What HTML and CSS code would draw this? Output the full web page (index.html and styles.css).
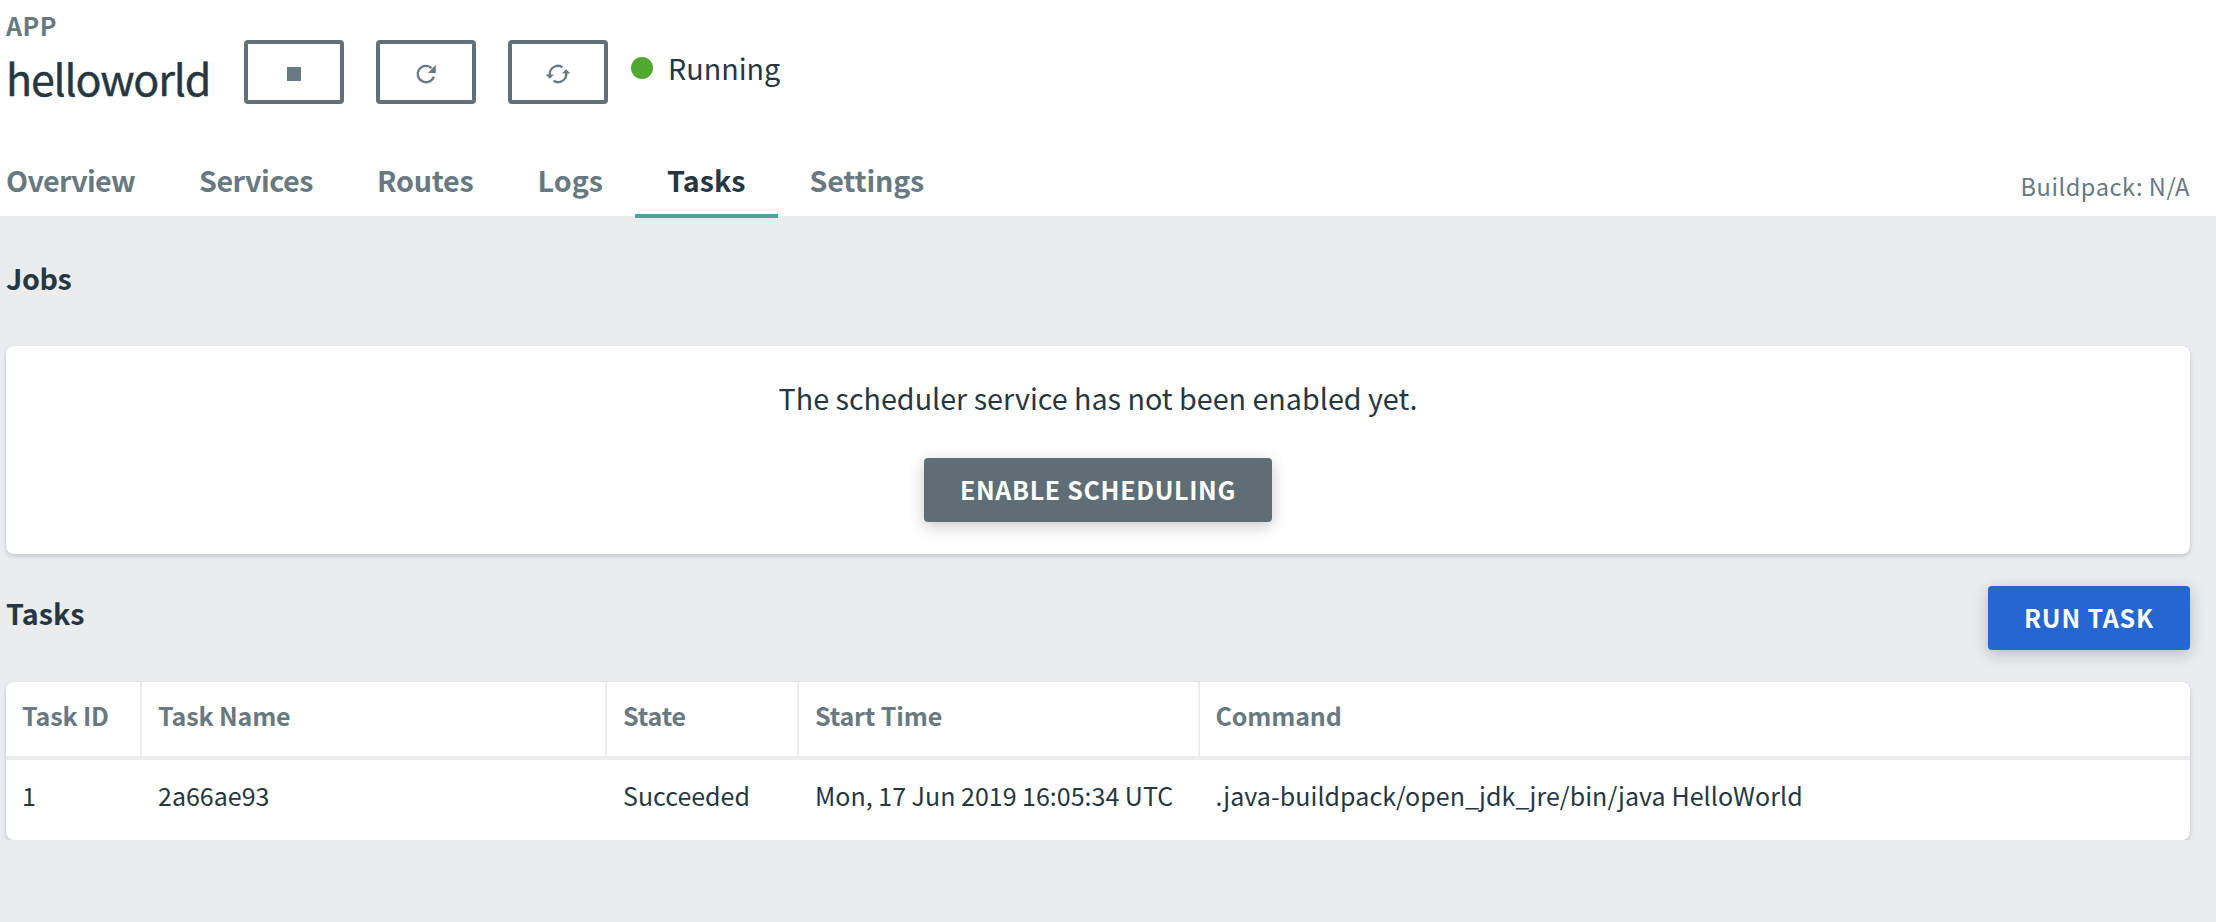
FILE: index.html
```
<!DOCTYPE html>
<html lang="en">
<head>
<meta charset="utf-8">
<title>helloworld</title>
<link rel="stylesheet" href="styles.css">
</head>
<body>
<header class="header">
  <div class="app-row">
    <div class="app-title">
      <div class="app-label">APP</div>
      <h1 class="app-name">helloworld</h1>
    </div>
    <div class="actions">
      <button class="icon-btn" aria-label="Stop"><svg width="28" height="28" viewBox="0 0 28 28"><rect x="7" y="7" width="14" height="14" fill="currentColor"/></svg></button>
      <button class="icon-btn" aria-label="Restart"><svg width="28" height="28" viewBox="0 0 28 28"><path d="M21.8 16.6A8.2 8.2 0 1 1 19.8 8.2" fill="none" stroke="currentColor" stroke-width="2.3"/><path d="M23.8 5v8h-8z" fill="currentColor"/></svg></button>
      <button class="icon-btn" aria-label="Restage"><svg width="28" height="28" viewBox="0 0 28 28"><path d="M5.8 15A8.2 8.2 0 0 1 18.4 7.2M22.2 13A8.2 8.2 0 0 1 9.6 20.8" fill="none" stroke="currentColor" stroke-width="2.3"/><path d="M1.6 14.5h8.4l-4.2 4.3zM18 13.5h8.4l-4.2-4.3z" fill="currentColor"/></svg></button>
    </div>
    <div class="status"><i class="dot"></i><span class="status-text">Running</span></div>
  </div>
  <div class="nav-row">
    <nav class="tabs">
      <a class="tab overview">Overview</a>
      <a class="tab services">Services</a>
      <a class="tab routes">Routes</a>
      <a class="tab">Logs</a>
      <a class="tab active">Tasks</a>
      <a class="tab settings">Settings</a>
    </nav>
    <div class="buildpack">Buildpack: N/A</div>
  </div>
</header>
<main class="content">
  <h2 class="section-title jobs-title">Jobs</h2>
  <section class="card empty">
    <p class="message">The scheduler service has not been enabled yet.</p>
    <button class="btn">ENABLE SCHEDULING</button>
  </section>
  <div class="tasks-head">
    <h2 class="section-title tasks-title">Tasks</h2>
    <button class="btn primary">RUN TASK</button>
  </div>
  <section class="card table">
    <div class="row head">
      <div class="cell">Task ID</div>
      <div class="cell">Task Name</div>
      <div class="cell">State</div>
      <div class="cell">Start Time</div>
      <div class="cell">Command</div>
    </div>
    <div class="row">
      <div class="cell">1</div>
      <div class="cell">2a66ae93</div>
      <div class="cell">Succeeded</div>
      <div class="cell">Mon, 17 Jun 2019 16:05:34 UTC</div>
      <div class="cell command">.java-buildpack/open_jdk_jre/bin/java HelloWorld</div>
    </div>
  </section>
</main>
</body>
</html>
```
FILE: styles.css
```
* { box-sizing: border-box; }
body {
  margin: 0;
  background: #ebecee;
  color: #273742;
  font-family: "Noto Sans CJK SC", "Open Sans", sans-serif;
  font-size: 25px;
}
h1, h2, p { margin: 0; font-weight: 400; }
button { font-family: inherit; padding: 0; margin: 0; }
.header { height: 216px; background: #fff; padding: 0 26px 0 6px; }
.app-row { display: flex; height: 144px; }
.app-title { width: 238px; padding-top: 7px; }
.app-label { color: #687982; font-size: 25px; font-weight: 700; line-height: 36px; letter-spacing: .5px; }
.app-name { margin-top: 2px; font-size: 43px; line-height: 64px; letter-spacing: -1.2px; white-space: nowrap; -webkit-text-stroke: .4px currentColor; }
.actions { display: flex; gap: 32px; padding-top: 40px; }
.icon-btn {
  display: flex; align-items: center; justify-content: center;
  width: 100px; height: 64px;
  background: #fff; color: #687982;
  border: 4px solid #617078; border-radius: 4px;
}
.icon-btn svg { margin-top: 4px; }
.status { display: flex; align-items: center; gap: 15px; height: 40px; margin: 48px 0 0 23px; font-size: 28.7px; }
.status-text { padding-bottom: 2px; }
.dot { width: 22px; height: 22px; border-radius: 50%; background: #4fa830; }
.nav-row { display: flex; justify-content: space-between; height: 74px; }
.tabs { display: flex; margin-left: -32px; }
.tab { height: 74px; padding: 14px 32px 0; color: #687982; font-size: 28.7px; font-weight: 700; line-height: 44px; }
.tab.active { color: #273742; border-bottom: 4px solid #49a59d; }
.overview { letter-spacing: -.69px; }
.services { letter-spacing: -.49px; }
.routes { letter-spacing: -.2px; }
.settings { letter-spacing: -.2px; }
.buildpack { padding-top: 24px; color: #687982; font-size: 23.6px; line-height: 36px; letter-spacing: .53px; }
.content { padding: 40px 26px 0 6px; }
.section-title { font-size: 28.7px; font-weight: 700; line-height: 44px; }
.jobs-title { letter-spacing: -.4px; }
.tasks-title { padding-top: 5px; }
.card { background: #fff; border-radius: 8px; box-shadow: 0 2px 4px rgba(39, 55, 66, .22); }
.empty { height: 208px; margin-top: 46px; display: flex; flex-direction: column; align-items: center; }
.message { margin-top: 30px; height: 82px; font-size: 28.7px; line-height: 44px; }
.btn {
  height: 64px; padding: 0 36px 2px; border: 0; border-radius: 4px;
  background: #5f6e75; color: #fff; font-size: 25px; font-weight: 700; letter-spacing: .66px;
  box-shadow: 0 4px 16px rgba(0, 0, 0, .22);
}
.primary { background: #2666d0; letter-spacing: .82px; }
.tasks-head { display: flex; justify-content: space-between; height: 128px; padding-top: 32px; }
.table { height: 158px; }
.row { display: grid; grid-template-columns: 136px 465px 192px 400.5px 1fr; height: 80px; }
.head { height: 78px; border-bottom: 4px solid #ebecee; color: #687982; font-weight: 700; letter-spacing: -.15px; }
.cell { padding: 17px 0 0 16px; line-height: 36px; }
.head .cell { padding-top: 15px; border-right: 2px solid #ebecee; }
.head .cell:last-child { border-right: 0; }
.command { letter-spacing: .06px; }
```
